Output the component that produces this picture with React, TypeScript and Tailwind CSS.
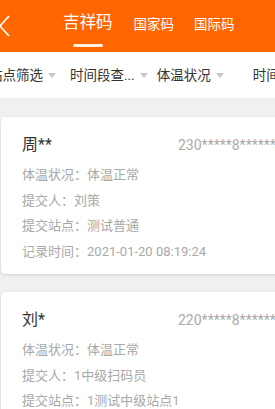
import React from 'react';

const font = { fontFamily: 'Roboto, "Noto Sans CJK SC", sans-serif' };

const filters = [
  { label: '站点筛选', ml: 'ml-[-11px]' },
  { label: '时间段查...', ml: 'ml-[14px]' },
  { label: '体温状况', ml: 'ml-[9px]' },
  { label: '时间', ml: 'ml-[29px]' },
];

type Record = {
  name: string;
  id: string;
  rows: [string, string][];
};

const records: Record[] = [
  {
    name: '周**',
    id: '230*****8*******',
    rows: [
      ['体温状况', '体温正常'],
      ['提交人', '刘策'],
      ['提交站点', '测试普通'],
      ['记录时间', '2021-01-20 08:19:24'],
    ],
  },
  {
    name: '刘*',
    id: '220*****8*******',
    rows: [
      ['体温状况', '体温正常'],
      ['提交人', '1中级扫码员'],
      ['提交站点', '1测试中级站点1'],
      ['记录时间', '2021-01-20 08:10:02'],
    ],
  },
];

const Caret = () => (
  <svg width="8" height="5" viewBox="0 0 8 5" className="ml-[5px] shrink-0">
    <path d="M0 0 L8 0 L4 5 Z" fill="#c8c8c8" />
  </svg>
);

const Card: React.FC<{ r: Record }> = ({ r }) => (
  <div className="ml-[1px] w-[300px] bg-white rounded-[4px] shadow-[0_1px_3px_rgba(0,0,0,0.14)] pl-[21px] pt-[19px] pb-[10px]">
    <div className="flex items-center h-[18px]">
      <span className="w-[156px] shrink-0 text-[16px] text-[#333]">{r.name}</span>
      <span className="text-[14px] text-[#aaa] whitespace-nowrap">{r.id}</span>
    </div>
    <div className="mt-[8px] flex flex-col">
      {r.rows.map(([k, v]) => (
        <div key={k} className="h-[25.5px] flex items-center text-[13px] text-[#a8a8a8] whitespace-nowrap">
          {k}：{v}
        </div>
      ))}
    </div>
  </div>
);

export default function App() {
  return (
    <div className="w-[275px] h-[409px] overflow-hidden bg-[#f0f0f0]" style={font}>
      <header className="h-[52px] bg-[#ff6600] flex items-start text-white">
        <svg width="12" height="22" viewBox="0 0 12 22" className="mt-[15px] ml-[-2px] shrink-0">
          <path d="M11 1 L2 11 L11 21" fill="none" stroke="white" strokeWidth="1.8" />
        </svg>
        <div className="ml-[53px] flex flex-col items-center pt-[12px]">
          <span className="text-[16.5px] leading-[22px]">吉祥码</span>
          <span className="mt-[10px] w-[30px] h-[3px] rounded-full bg-white/90" />
        </div>
        <span className="ml-[21px] mt-[14px] text-[13.5px] leading-[20px]">国家码</span>
        <span className="ml-[20px] mt-[14px] text-[13.5px] leading-[20px]">国际码</span>
      </header>

      <div className="h-[46px] bg-white flex items-center whitespace-nowrap text-[13.5px] text-[#333]">
        {filters.map((f) => (
          <div key={f.label} className={`flex items-center shrink-0 ${f.ml}`}>
            <span>{f.label}</span>
            {f.label !== '时间' && <Caret />}
          </div>
        ))}
      </div>

      <div className="pt-[19px] flex flex-col gap-[18px]">
        {records.map((r) => (
          <Card key={r.name} r={r} />
        ))}
      </div>
    </div>
  );
}
